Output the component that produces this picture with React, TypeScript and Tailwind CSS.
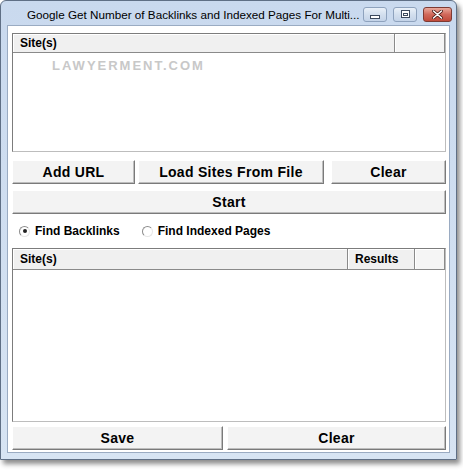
import React from "react";

const ui = { fontFamily: '"Liberation Sans", Arial, sans-serif' };

function Btn({ label, className }: { label: string; className: string }) {
  return (
    <button
      className={`h-[24px] bg-[#f3f3f3] border border-t-white border-l-white border-r-[#7a7a7a] border-b-[#7a7a7a] shadow-[inset_-1px_-1px_0_#bdbdbd] text-[14px] font-bold tracking-[0.3px] text-black flex items-center justify-center ${className}`}
      style={ui}
    >
      {label}
    </button>
  );
}

function HeadCell({ label, className }: { label?: string; className: string }) {
  return (
    <div
      className={`h-full bg-[#f0f0f0] border-r border-r-[#8a8a8a] shadow-[inset_1px_1px_0_#ffffff] flex items-center pl-[7px] text-[12px] font-bold text-black ${className}`}
      style={ui}
    >
      {label}
    </div>
  );
}

function Radio({ checked, label }: { checked?: boolean; label: string }) {
  return (
    <div className="flex items-center gap-[5px]">
      <span className="w-[11px] h-[11px] rounded-full border border-[#8c8c8c] border-b-[#e6e6e6] border-r-[#e6e6e6] bg-white flex items-center justify-center">
        {checked && <span className="w-[4px] h-[4px] rounded-full bg-[#222]" />}
      </span>
      <span className="text-[12px] font-bold text-black" style={ui}>
        {label}
      </span>
    </div>
  );
}

function CaptionButton({ kind }: { kind: "min" | "max" | "close" }) {
  if (kind === "close") {
    return (
      <div className="w-[29px] h-[15px] rounded-[3px] border border-[#7d3a33] bg-gradient-to-b from-[#e9a99c] via-[#d0685a] to-[#c04a3a] flex items-center justify-center">
        <svg width="11" height="9" viewBox="0 0 11 9">
          <path d="M1.5 1 L9.5 8 M9.5 1 L1.5 8" stroke="#4a1a14" strokeWidth="3" strokeLinecap="round" />
          <path d="M1.5 1 L9.5 8 M9.5 1 L1.5 8" stroke="#ffffff" strokeWidth="1.6" strokeLinecap="round" />
        </svg>
      </div>
    );
  }
  return (
    <div className="w-[24px] h-[15px] rounded-[3px] border border-[#8ea2bd] bg-gradient-to-b from-[#e9f0f8] via-[#d3dfee] to-[#c3d3e8] flex items-center justify-center">
      {kind === "min" ? (
        <span className="mt-[5px] w-[10px] h-[4px] border border-[#3c4a5e] bg-white" />
      ) : (
        <span className="w-[9px] h-[8px] border border-[#3c4a5e] bg-white flex items-center justify-center">
          <span className="w-[5px] h-[3px] border border-[#3c4a5e]" />
        </span>
      )}
    </div>
  );
}

export default function App() {
  return (
    <div className="w-[463px] h-[470px] bg-white">
      <div className="w-[457px] h-[460px] rounded-t-[6px] border border-[#5f6f85] bg-gradient-to-b from-[#c9d9ee] to-[#d7e4f3] shadow-[3px_4px_5px_rgba(0,0,0,0.45)] flex flex-col">
        {/* title bar */}
        <div className="h-[24px] flex items-center shrink-0">
          <div className="pl-[26px] pt-[3px] w-[360px] text-[11.7px] text-black whitespace-nowrap overflow-hidden" style={ui}>
            Google Get Number of Backlinks and Indexed Pages For Multi...
          </div>
          <div className="flex items-center gap-[6px] ml-[2px] mt-[2px]">
            <CaptionButton kind="min" />
            <CaptionButton kind="max" />
            <CaptionButton kind="close" />
          </div>
        </div>

        {/* client */}
        <div className="ml-[6px] w-[443px] h-[428px] bg-white border border-[#9aabc2] px-[4px] pt-[7px] flex flex-col">
          {/* list 1 */}
          <div className="h-[119px] w-[434px] border border-[#7c7c7c] border-b-[#bdbdbd] border-r-[#bdbdbd] flex flex-col">
            <div className="h-[19px] flex border-b border-b-[#8a8a8a] shrink-0">
              <HeadCell label="Site(s)" className="w-[382px]" />
              <HeadCell className="flex-1 bg-[#f5f5f5]" />
            </div>
            <div className="pl-[39px] pt-[3px] text-[13px] tracking-[2px] text-[#c8c8c8] font-bold" style={ui}>
              LAWYERMENT.COM
            </div>
          </div>

          {/* button row */}
          <div className="mt-[8px] flex w-[434px]">
            <Btn label="Add URL" className="w-[123px]" />
            <Btn label="Load Sites From File" className="w-[186px] ml-[3px]" />
            <Btn label="Clear" className="w-[115px] ml-[7px]" />
          </div>
          <Btn label="Start" className="mt-[6px] w-[434px]" />

          {/* radios */}
          <div className="h-[18px] mt-[8px] flex items-center pl-[7px] gap-[22px]">
            <Radio checked label="Find Backlinks" />
            <Radio label="Find Indexed Pages" />
          </div>

          {/* list 2 */}
          <div className="mt-[8px] h-[174px] w-[434px] border border-[#7c7c7c] border-b-[#bdbdbd] border-r-[#bdbdbd] flex flex-col">
            <div className="h-[21px] flex border-b border-b-[#8a8a8a] shrink-0">
              <HeadCell label="Site(s)" className="w-[335px]" />
              <HeadCell label="Results" className="w-[67px]" />
              <HeadCell className="flex-1 bg-[#f5f5f5]" />
            </div>
          </div>

          {/* bottom buttons */}
          <div className="mt-[4px] flex w-[434px] gap-[4px]">
            <Btn label="Save" className="w-[211px]" />
            <Btn label="Clear" className="flex-1" />
          </div>
        </div>
      </div>
    </div>
  );
}
